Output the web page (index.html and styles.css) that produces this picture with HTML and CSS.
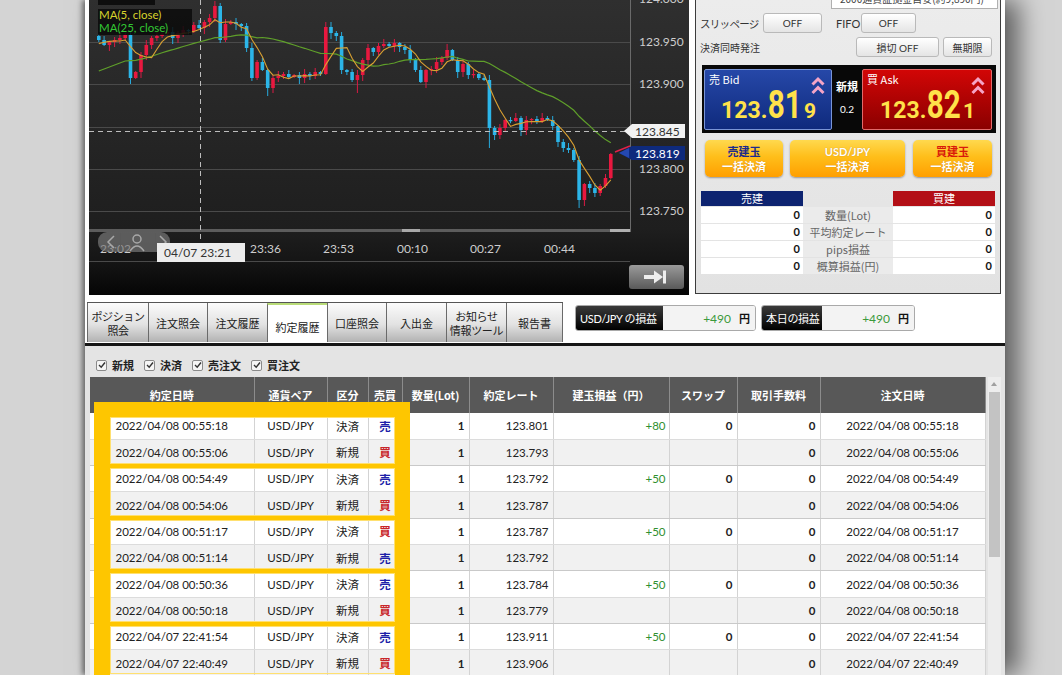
FILE: index.html
```html
<!DOCTYPE html>
<html lang="ja">
<head>
<meta charset="utf-8">
<title>約定履歴</title>
<link rel="stylesheet" href="styles.css">
</head>
<body>
<div class="window">
  <div class="top">
    <div class="chart">
      <svg id="chart" width="600" height="295" viewBox="0 0 600 295">
        <defs>
          <linearGradient id="btnGrad" x1="0" y1="0" x2="0" y2="1">
            <stop offset="0" stop-color="#9a9a9a"/>
            <stop offset="1" stop-color="#5a5a5a"/>
          </linearGradient>
        </defs>
        <g class="grid">
          <line x1="0" y1="42.5" x2="541" y2="42.5"/>
          <line x1="0" y1="84.5" x2="541" y2="84.5"/>
          <line x1="0" y1="127.5" x2="541" y2="127.5"/>
          <line x1="0" y1="169.5" x2="541" y2="169.5"/>
          <line x1="0" y1="211.5" x2="541" y2="211.5"/>
          <line x1="0" y1="261.5" x2="541" y2="261.5"/>
          <line class="axis" x1="541.5" y1="0" x2="541.5" y2="232"/>
        </g>
        <rect x="0" y="229" width="541" height="3" fill="#5c5c5c"/>
        <rect x="313" y="229" width="18" height="3" fill="#a8a8a8"/>
        <rect x="521" y="229" width="20" height="3" fill="#b0b0b0"/>
        <g id="candles"></g>
        <polyline id="ma25" fill="none" stroke="#5f9f2a" stroke-width="1.2"/>
        <polyline id="ma5" fill="none" stroke="#d9a032" stroke-width="1.1"/>
        <line class="dash" x1="0" y1="131.5" x2="541" y2="131.5"/>
        <line class="dash" x1="111.5" y1="0" x2="111.5" y2="243"/>
        <rect x="9" y="-5" width="57" height="10" fill="#0b0b0b" opacity="0.9"/>
        <rect x="9" y="9" width="94" height="26" fill="#0b0b0b" opacity="0.85"/>
        <text class="ma5t" x="10" y="19">MA(5, close)</text>
        <text class="ma25t" x="10" y="32">MA(25, close)</text>
        <g class="plabels">
          <text x="550" y="3">124.000</text>
          <text x="550" y="46">123.950</text>
          <text x="550" y="88">123.900</text>
          <text x="550" y="173">123.800</text>
          <text x="550" y="215">123.750</text>
        </g>
        <polygon points="535,131 543,124 596,124 596,138 543,138" fill="#f2f2f2"/>
        <text class="lbl-dark" x="546" y="135.5">123.845</text>
        <line x1="526" y1="152" x2="541" y2="146" stroke="#e0204a" stroke-width="1.4"/>
        <polygon points="530,153 543,146 596,146 596,160 543,160" fill="#0e2a7c"/>
        <polygon points="530,153 540,148 540,158" fill="#2448b0"/>
        <text class="lbl-white" x="546" y="157.5">123.819</text>
        <g class="tlabels">
          <text x="11" y="253">23:02</text>
          <text x="161" y="253">23:36</text>
          <text x="234" y="253">23:53</text>
          <text x="308" y="253">00:10</text>
          <text x="381" y="253">00:27</text>
          <text x="455" y="253">00:44</text>
        </g>
        <rect x="9" y="232" width="72" height="20" rx="9" fill="#777" opacity="0.7"/>
        <line x1="31.5" y1="233" x2="31.5" y2="251" stroke="#5a5a5a"/>
        <line x1="66.5" y1="233" x2="66.5" y2="251" stroke="#5a5a5a"/>
        <polyline points="25,236 19,242 25,248" fill="none" stroke="#a8a8a8" stroke-width="1.5"/>
        <circle cx="48" cy="239" r="4" fill="none" stroke="#a8a8a8" stroke-width="1.5"/>
        <path d="M41 251 Q48 241 55 251" fill="none" stroke="#a8a8a8" stroke-width="1.5"/>
        <polyline points="71,236 77,242 71,248" fill="none" stroke="#a8a8a8" stroke-width="1.5"/>
        <rect x="68" y="243" width="88" height="19" fill="#ececec"/>
        <text class="lbl-dark" x="75" y="257">04/07 23:21</text>
        <rect x="540" y="265" width="55" height="24" rx="3" fill="url(#btnGrad)"/>
        <rect x="555" y="275" width="11" height="4" fill="#eee"/>
        <polygon points="565,270.5 574,277 565,283.5" fill="#eee"/>
        <rect x="574" y="270.5" width="3" height="13" fill="#eee"/>
      </svg>
    </div>
    <div class="panel">
      <div class="topbox">2000通貨証拠金目安(約9,890円)</div>
      <div class="prow">
        <span class="plabel slip">スリッページ</span>
        <span class="btn b-slip">OFF</span>
        <span class="plabel fifo">FIFO</span>
        <span class="btn b-fifo">OFF</span>
      </div>
      <div class="prow">
        <span class="plabel small">決済同時発注</span>
        <span class="btn b-stop">損切 OFF</span>
        <span class="btn b-exp">無期限</span>
      </div>
      <div class="quote">
        <div class="qbox bid">
          <div class="qtitle">売 Bid</div>
          <svg class="chev" width="14" height="20" viewBox="0 0 14 20"><polyline points="1.5,8.5 7,3 12.5,8.5"/><polyline points="1.5,17 7,11.5 12.5,17"/></svg>
          <div class="qprice"><span class="p1">123.</span><span class="p2">81</span><span class="p3">9</span></div>
        </div>
        <div class="qmid"><b>新規</b><span>0.2</span></div>
        <div class="qbox ask">
          <div class="qtitle">買 Ask</div>
          <svg class="chev" width="14" height="20" viewBox="0 0 14 20"><polyline points="1.5,8.5 7,3 12.5,8.5"/><polyline points="1.5,17 7,11.5 12.5,17"/></svg>
          <div class="qprice"><span class="p1">123.</span><span class="p2">82</span><span class="p3">1</span></div>
        </div>
      </div>
      <div class="obtns">
        <div class="obtn o1"><span class="navy">売建玉</span><span>一括決済</span></div>
        <div class="obtn o2"><span>USD/JPY</span><span>一括決済</span></div>
        <div class="obtn o3"><span class="red">買建玉</span><span>一括決済</span></div>
      </div>
      <div class="sum">
        <div class="sh sell">売建</div><div class="sh mid"></div><div class="sh buy">買建</div>
        <div class="sv">0</div><div class="sl">数量(Lot)</div><div class="sv">0</div>
        <div class="sv">0</div><div class="sl">平均約定レート</div><div class="sv">0</div>
        <div class="sv">0</div><div class="sl">pips損益</div><div class="sv">0</div>
        <div class="sv">0</div><div class="sl">概算損益(円)</div><div class="sv">0</div>
      </div>
    </div>
  </div>

  <div class="tabbar">
    <div class="tabs">
      <div class="tab t1">ポジション<br>照会</div>
      <div class="tab t2">注文照会</div>
      <div class="tab t3">注文履歴</div>
      <div class="tab t4 active">約定履歴</div>
      <div class="tab t5">口座照会</div>
      <div class="tab t6">入出金</div>
      <div class="tab t7">お知らせ<br>情報ツール</div>
      <div class="tab t8">報告書</div>
    </div>
    <div class="pl pl1"><div class="pl-label">USD/JPY の損益</div><div class="pl-val"><span class="plus">+490</span><b>円</b></div></div>
    <div class="pl pl2"><div class="pl-label">本日の損益</div><div class="pl-val"><span class="plus">+490</span><b>円</b></div></div>
  </div>

  <div class="lower">
    <div class="filters">
      <span class="cb"><svg width="8" height="8" viewBox="0 0 8 8"><polyline points="1,4 3.2,6.2 7,1.5"/></svg></span><b>新規</b>
      <span class="cb"><svg width="8" height="8" viewBox="0 0 8 8"><polyline points="1,4 3.2,6.2 7,1.5"/></svg></span><b>決済</b>
      <span class="cb"><svg width="8" height="8" viewBox="0 0 8 8"><polyline points="1,4 3.2,6.2 7,1.5"/></svg></span><b>売注文</b>
      <span class="cb"><svg width="8" height="8" viewBox="0 0 8 8"><polyline points="1,4 3.2,6.2 7,1.5"/></svg></span><b>買注文</b>
    </div>
    <div class="tablewrap">
      <table class="trades">
        <colgroup>
          <col style="width:164px"><col style="width:73px"><col style="width:41px"><col style="width:34px"><col style="width:67px"><col style="width:84px"><col style="width:116px"><col style="width:68px"><col style="width:83px"><col style="width:165px">
        </colgroup>
        <thead>
          <tr><th>約定日時</th><th>通貨ペア</th><th>区分</th><th>売買</th><th>数量(Lot)</th><th>約定レート</th><th>建玉損益（円）</th><th>スワップ</th><th>取引手数料</th><th>注文日時</th></tr>
        </thead>
        <tbody>
          <tr><td class="c">2022/04/08 00:55:18</td><td class="c">USD/JPY</td><td class="c">決済</td><td class="c sell">売</td><td class="r b">1</td><td class="r">123.801</td><td class="r g">+80</td><td class="r b">0</td><td class="r b">0</td><td class="c">2022/04/08 00:55:18</td></tr>
          <tr><td class="c">2022/04/08 00:55:06</td><td class="c">USD/JPY</td><td class="c">新規</td><td class="c buy">買</td><td class="r b">1</td><td class="r">123.793</td><td class="r g"></td><td class="r b"></td><td class="r b">0</td><td class="c">2022/04/08 00:55:06</td></tr>
          <tr><td class="c">2022/04/08 00:54:49</td><td class="c">USD/JPY</td><td class="c">決済</td><td class="c sell">売</td><td class="r b">1</td><td class="r">123.792</td><td class="r g">+50</td><td class="r b">0</td><td class="r b">0</td><td class="c">2022/04/08 00:54:49</td></tr>
          <tr><td class="c">2022/04/08 00:54:06</td><td class="c">USD/JPY</td><td class="c">新規</td><td class="c buy">買</td><td class="r b">1</td><td class="r">123.787</td><td class="r g"></td><td class="r b"></td><td class="r b">0</td><td class="c">2022/04/08 00:54:06</td></tr>
          <tr><td class="c">2022/04/08 00:51:17</td><td class="c">USD/JPY</td><td class="c">決済</td><td class="c buy">買</td><td class="r b">1</td><td class="r">123.787</td><td class="r g">+50</td><td class="r b">0</td><td class="r b">0</td><td class="c">2022/04/08 00:51:17</td></tr>
          <tr><td class="c">2022/04/08 00:51:14</td><td class="c">USD/JPY</td><td class="c">新規</td><td class="c sell">売</td><td class="r b">1</td><td class="r">123.792</td><td class="r g"></td><td class="r b"></td><td class="r b">0</td><td class="c">2022/04/08 00:51:14</td></tr>
          <tr><td class="c">2022/04/08 00:50:36</td><td class="c">USD/JPY</td><td class="c">決済</td><td class="c sell">売</td><td class="r b">1</td><td class="r">123.784</td><td class="r g">+50</td><td class="r b">0</td><td class="r b">0</td><td class="c">2022/04/08 00:50:36</td></tr>
          <tr><td class="c">2022/04/08 00:50:18</td><td class="c">USD/JPY</td><td class="c">新規</td><td class="c buy">買</td><td class="r b">1</td><td class="r">123.779</td><td class="r g"></td><td class="r b"></td><td class="r b">0</td><td class="c">2022/04/08 00:50:18</td></tr>
          <tr><td class="c">2022/04/07 22:41:54</td><td class="c">USD/JPY</td><td class="c">決済</td><td class="c sell">売</td><td class="r b">1</td><td class="r">123.911</td><td class="r g">+50</td><td class="r b">0</td><td class="r b">0</td><td class="c">2022/04/07 22:41:54</td></tr>
          <tr><td class="c">2022/04/07 22:40:49</td><td class="c">USD/JPY</td><td class="c">新規</td><td class="c buy">買</td><td class="r b">1</td><td class="r">123.906</td><td class="r g"></td><td class="r b"></td><td class="r b">0</td><td class="c">2022/04/07 22:40:49</td></tr>
        </tbody>
      </table>
      <div class="sb"><span class="sb-up"></span><span class="sb-thumb"></span></div>
    </div>
    <div class="hl">
      <div class="pair first"></div>
      <div class="pair"></div>
      <div class="pair"></div>
      <div class="pair"></div>
      <div class="pair"></div>
    </div>
  </div>
</div>
<script src="chart.js"></script>
</body>
</html>
```

FILE: styles.css
```css
* { box-sizing: border-box; }
html, body { margin: 0; height: 100%; }
body {
  background: #d4d4d4;
  font-family: Lato, "Noto Sans CJK JP", sans-serif;
  overflow: hidden;
  color: #222;
}
.window {
  margin-left: 85px;
  width: 920px;
  height: 675px;
  background: #fff;
  display: flex;
  flex-direction: column;
  box-shadow: -3px 0 5px rgba(0,0,0,.45), 14px 0 24px rgba(0,0,0,.55);
}

/* ---------- top ---------- */
.top { display: flex; height: 295px; flex: none; padding-left: 4px; gap: 6px; }
.chart {
  width: 600px; height: 295px; flex: none;
  background: linear-gradient(#2f2f2f 0, #1e1e1e 230px, #151515 262px, #050505 295px);
}
.chart svg { display: block; overflow: hidden; }
.grid line { stroke: #4a4a4a; stroke-width: 1; }
.grid .axis { stroke: #6a6a6a; }
.dash { stroke: #bdbdbd; stroke-width: 1; stroke-dasharray: 5 4; }
.chart text { font-family: Lato, sans-serif; font-size: 12px; }
.chart text.ma5t, .chart text.ma25t { font-size: 11.5px; }
.ma5t { fill: #d8d42c; }
.ma25t { fill: #33c833; }
.plabels text, .tlabels text { fill: #cdcdcd; }
.lbl-dark { fill: #333; }
.lbl-white { fill: #fff; }

/* ---------- right panel ---------- */
.panel {
  width: 306px; height: 294px; flex: none;
  border: 1px solid #3c3c3c; border-top: none;
  background: linear-gradient(#ececec, #e2e2e2);
  display: flex; flex-direction: column;
  font-family: "Noto Sans CJK JP", sans-serif;
}
.topbox {
  margin: -12px 2px 0 auto;
  width: 167px; height: 21px;
  border: 1px solid #b0b0b0; background: #fff;
  font-size: 10px; line-height: 19px; padding-left: 8px; color: #444;
  white-space: nowrap; overflow: hidden;
}
.prow { display: flex; align-items: center; height: 20px; margin-top: 4px; padding-left: 4px; }
.plabel { font-size: 11px; color: #333; white-space: nowrap; }
.plabel.slip { width: 63px; flex: none; font-size: 10.5px; letter-spacing: -0.7px; }
.plabel.fifo { margin-left: 14px; width: 25px; font-family: Lato, sans-serif; }
.plabel.small { font-size: 10px; }
.btn {
  height: 20px; display: flex; align-items: center; justify-content: center;
  border: 1px solid #b9b9b9; border-radius: 3px;
  background: linear-gradient(#ffffff, #e4e4e4);
  font-size: 10px; color: #333; font-family: Lato, "Noto Sans CJK JP", sans-serif;
}
.b-slip { width: 59px; }
.b-fifo { width: 55px; }
.b-stop { width: 83px; margin-left: auto; }
.b-exp { width: 49px; margin-left: 4px; margin-right: 8px; }

.quote {
  margin: 8px 0 0 6px; width: 294px; height: 68px;
  background: #080808; display: flex; padding: 4px 4px 0 2px;
}
.qbox {
  position: relative; height: 61px;
  border: 1px solid; border-radius: 2px;
  display: flex; flex-direction: column; justify-content: space-between;
}
.bid { width: 128px; border-color: #7a95d6; background: linear-gradient(#2648a8, #0f2a7d); }
.ask { width: 130px; border-color: #e26a6a; background: linear-gradient(#d20606, #8a0000); }
.qtitle { color: #fff; font-size: 11px; padding: 2px 0 0 4px; line-height: 14px; }
.chev { position: absolute; top: 6px; right: 6px; }
.chev polyline { fill: none; stroke: #f5a4c6; stroke-width: 3; }
.qprice {
  display: flex; align-items: baseline; justify-content: flex-end;
  padding-right: 15px; margin-bottom: 8px;
  color: #ffe24a; font-family: Roboto, "Open Sans", sans-serif; font-weight: 700; line-height: 1;
}
.p1 { font-size: 23px; }
.p2 { font-size: 38px; display: inline-block; transform: scaleX(.78); transform-origin: center; margin: 0 -4px; }
.p3 { font-size: 21px; margin-left: 1px; }
.ask .qprice { padding-right: 16px; }
.qmid {
  width: 30px; display: flex; flex-direction: column; align-items: center;
  color: #fff; padding-top: 10px;
}
.qmid b { font-size: 11px; line-height: 14px; }
.qmid span { font-size: 10px; margin-top: 10px; font-family: Lato, sans-serif; }

.obtns { display: flex; margin: 7px 0 0 9px; gap: 7px; }
.obtn {
  height: 37px; border-radius: 5px;
  background: linear-gradient(#ffd94e 0, #ffbe1a 45%, #ff9f00 100%);
  box-shadow: 0 1px 2px rgba(0,0,0,.35);
  display: flex; flex-direction: column; align-items: center; justify-content: center;
  font-size: 11px; font-weight: 700; line-height: 14px; color: #fff;
  text-shadow: 0 0 1px rgba(150,80,0,.5);
}
.o1 { width: 78px; }
.o2 { width: 115px; }
.o3 { width: 79px; margin-left: 1px; }
.obtn .navy { color: #1c2b8c; text-shadow: none; }
.obtn .red { color: #d91a0a; text-shadow: none; }
.obtn span:first-child { font-family: Lato, "Noto Sans CJK JP", sans-serif; }

.sum {
  margin: 14px 0 0 5px; width: 294px;
  display: grid; grid-template-columns: 102px 90px 102px;
  grid-template-rows: 15px repeat(4, 16px); row-gap: 1px;
  font-size: 11px;
}
.sh { color: #fff; text-align: center; line-height: 15px; }
.sh.sell { background: #0d2370; }
.sh.buy { background: #b30f16; }
.sv { background: #fff; text-align: right; padding-right: 3px; line-height: 16px; font-family: Lato, sans-serif; font-weight: 700; color: #111; }
.sl { background: #ebebeb; text-align: center; line-height: 16px; color: #666; }

/* ---------- tab bar ---------- */
.tabbar { display: flex; align-items: flex-start; height: 48px; flex: none; padding: 7px 0 0 2px; }
.tabs { display: flex; height: 40px; border-top: 1px solid #555; }
.tab {
  height: 39px; border-left: 1px solid #6a6a6a;
  background: linear-gradient(#fbfbfb 0, #e2e2e2 55%, #b2b2b2 100%);
  display: flex; align-items: center; justify-content: center; text-align: center;
  font-family: "Noto Sans CJK JP", sans-serif; font-size: 11px; line-height: 14px; color: #222;
  white-space: nowrap;
}
.tab.t1 { width: 61px; letter-spacing: -0.4px; }
.t2 { width: 59px; }
.t3 { width: 60px; }
.t4 { width: 60px; }
.t5 { width: 59px; }
.t6 { width: 60px; }
.t7 { width: 60px; letter-spacing: -0.3px; }
.t8 { width: 57px; border-right: 1px solid #6a6a6a; }
.tab.active { background: #fff; border-top: 2px solid #b9dc78; padding-top: 6px; }
.pl { display: flex; height: 26px; margin-top: 3px; border: 1px solid #a9a9a9; border-radius: 3px; overflow: hidden; font-size: 11px; }
.pl1 { margin-left: 12px; width: 181px; }
.pl2 { margin-left: 5px; width: 154px; }
.pl-label {
  background: linear-gradient(#3a3a3a, #000); color: #fff;
  display: flex; align-items: center; padding-left: 4px; letter-spacing: -0.3px;
}
.pl1 .pl-label { width: 87px; }
.pl2 .pl-label { width: 60px; }
.pl-val {
  flex: 1; background: #f3f3f3; display: flex; align-items: center; justify-content: flex-end;
  padding-right: 5px; font-size: 12px;
}
.plus { color: #3b9a3b; font-family: Lato, sans-serif; }
.pl-val b { margin-left: 8px; font-size: 11px; color: #111; }

/* ---------- lower ---------- */
.lower {
  position: relative; flex: 1; min-height: 0; overflow: hidden;
  background: #e4e4e4; border-top: 3px solid #161616;
  padding: 9px 0 0 5px;
}
.filters { display: flex; align-items: center; height: 20px; padding-left: 6px; font-size: 11px; }
.filters b { margin: 0 10px 0 5px; font-family: "Noto Sans CJK JP", sans-serif; }
.cb {
  width: 11px; height: 11px; border: 1px solid #8a8a8a; border-radius: 2px; background: #f5f5f5;
  display: flex; align-items: center; justify-content: center;
}
.cb polyline { fill: none; stroke: #333; stroke-width: 1.4; }
.tablewrap { display: flex; margin-top: 2px; height: 320px; }
.trades { width: 895px; table-layout: fixed; border-collapse: collapse; font-size: 11.5px; color: #222; flex: none; align-self: flex-start; }
.trades th {
  height: 36px; padding: 0; background: #585858; color: #fff;
  font-family: "Noto Sans CJK JP", sans-serif; font-weight: 700; font-size: 11px;
  border-right: 1px solid #8c8c8c;
}
.trades td { height: 26.33px; padding: 0 4px; border-right: 1px solid #d3d3d3; border-bottom: 1px solid #dcdcdc; white-space: nowrap; overflow: hidden; }
.trades tbody tr:nth-child(odd) td { background: #fff; }
.trades tbody tr:nth-child(even) td { background: #f1f1f1; }
.trades tbody tr:nth-child(even) td { border-bottom-color: #c9c9c9; }
.c { text-align: center; }
.r { text-align: right; }
.trades td.b { font-weight: 700; }
.trades td.g { color: #2f8f2f; padding-right: 3px; }
.trades td.sell { color: #1d1fa8; font-weight: 700; font-family: "Noto Sans CJK JP", sans-serif; }
.trades td.buy { color: #c8262a; font-weight: 700; font-family: "Noto Sans CJK JP", sans-serif; }
.trades td:nth-child(3) { font-family: "Noto Sans CJK JP", sans-serif; }
.sb { width: 13px; margin-left: 2px; background: #ededed; position: relative; }
.sb-up {
  position: absolute; top: 5px; left: 3px;
  border-left: 3.5px solid transparent; border-right: 3.5px solid transparent; border-bottom: 4px solid #a0a0a0;
}
.sb-thumb { position: absolute; top: 15px; left: 1px; width: 11px; height: 165px; background: #c3c3c3; }

.hl {
  position: absolute; left: 9px; top: 56px; width: 316px; height: 300px;
  border: 15px solid #fec600; border-left-width: 16px;
  display: flex; flex-direction: column;
}
.pair { height: 52.67px; flex: none; border-top: 4px solid #fec600; box-shadow: inset 0 0 0 1px #ffe070; }
.pair.first { height: 46.67px; border-top: none; }
```

FILE: chart.js
```js
(function () {
  var closes = [40,45,42,40,38,35,78,72,55,45,38,36,34,32,38,33,30,31,25,28,22,18,6,40,24,22,24,26,48,78,62,70,88,78,76,74,77,75,78,74,76,72,74,27,33,36,70,72,80,75,60,48,52,46,44,46,43,47,50,60,70,82,70,69,62,58,50,60,72,64,75,74,78,80,128,135,128,120,121,118,130,120,119,121,118,120,126,142,148,150,160,200,184,188,193,186,178,154];
  var pre = [95,92,90,88,86,85,83,82,80,79,78,76,75,73,72,70,68,66,62,58,52,46,42,38];
  var hiO = {22: 1, 43: 22, 66: 44, 51: 44};
  var loO = {91: 208, 74: 148, 6: 84, 32: 96, 75: 140, 49: 93, 68: 78, 86: 130};
  var NS = 'http://www.w3.org/2000/svg';
  var g = document.getElementById('candles');
  var x0 = 8, dx = 5.278, bw = 3.6, open = 36;
  var red = '', blue = '', wr = '', wb = '';
  for (var i = 0; i < closes.length; i++) {
    var c = closes[i], x = x0 + i * dx;
    var t = Math.min(open, c), b = Math.max(open, c);
    if (b - t < 1.2) { b = t + 1.2; }
    var hi = hiO[i] !== undefined ? hiO[i] : t - 1 - ((i * 37 + 11) % 5);
    var lo = loO[i] !== undefined ? loO[i] : b + 1 + ((i * 53 + 7) % 6);
    var cx = (x + bw / 2).toFixed(1);
    var rect = 'M' + x.toFixed(1) + ' ' + t.toFixed(1) + 'h' + bw + 'v' + (b - t).toFixed(1) + 'h-' + bw + 'z';
    var wick = 'M' + cx + ' ' + hi.toFixed(1) + 'V' + lo.toFixed(1);
    if (c < open) { red += rect; wr += wick; } else { blue += rect; wb += wick; }
    open = c;
  }
  function path(d, fill, stroke) {
    var p = document.createElementNS(NS, 'path');
    p.setAttribute('d', d);
    if (fill) { p.setAttribute('fill', fill); }
    else { p.setAttribute('fill', 'none'); p.setAttribute('stroke', stroke); p.setAttribute('stroke-width', '1'); }
    g.appendChild(p);
  }
  path(wr, null, '#d81a44');
  path(wb, null, '#27a9dc');
  path(red, '#e8183f');
  path(blue, '#2cb5e8');
  var s = pre.concat(closes);
  function ma(n) {
    var pts = [];
    for (var i = 0; i < closes.length; i++) {
      var j = i + pre.length, sum = 0;
      for (var k = j - n + 1; k <= j; k++) { sum += s[k]; }
      pts.push((x0 + i * dx + bw / 2).toFixed(1) + ',' + (sum / n).toFixed(1));
    }
    return pts.join(' ');
  }
  document.getElementById('ma5').setAttribute('points', ma(5));
  document.getElementById('ma25').setAttribute('points', ma(25));
})();
```
